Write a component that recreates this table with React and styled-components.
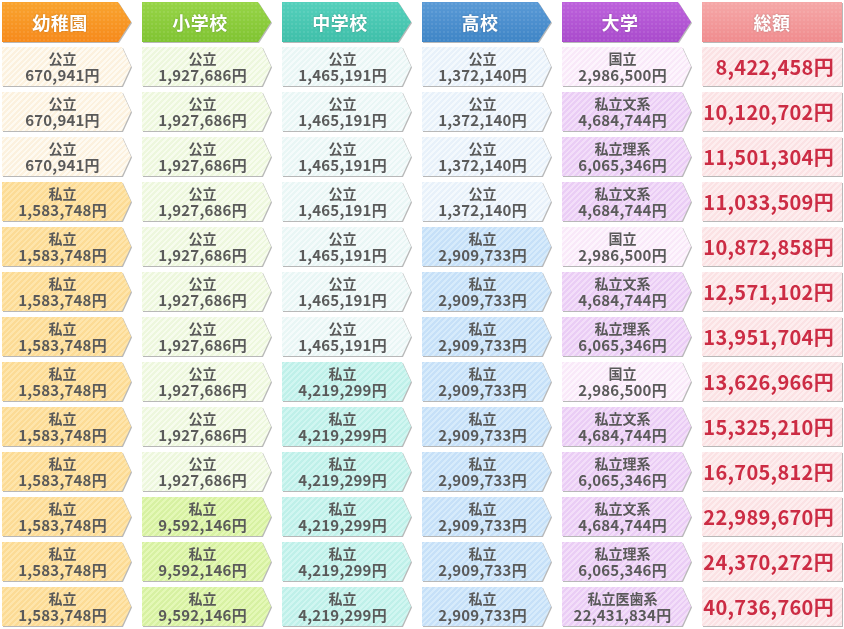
import React from "react";
import styled, { createGlobalStyle } from "styled-components";

const GlobalStyle = createGlobalStyle`
  html, body {
    margin: 0;
    padding: 0;
    background: #fff;
  }
  body {
    font-family: "Noto Sans CJK JP", "Noto Sans", sans-serif;
  }
`;

const columns = [
  { title: "幼稚園", head: ["#f9a42f", "#f68a1c"], light: ["#fefaf1", "#fcf1de"], dark: ["#fee5ac", "#fcdb95"] },
  { title: "小学校", head: ["#97d447", "#80c432"], light: ["#f7fcee", "#edf7dd"], dark: ["#e4f8b7", "#d7f1a2"] },
  { title: "中学校", head: ["#55d0bc", "#3fbfa9"], light: ["#f5fbfb", "#e9f6f5"], dark: ["#d1f6f1", "#bff0e9"] },
  { title: "高校", head: ["#5a9ad6", "#3f85c6"], light: ["#f4f9fd", "#e8f1fa"], dark: ["#d7ebfb", "#c6e0f8"] },
  { title: "大学", head: ["#bd62dc", "#a94bcc"], light: ["#fdf5fd", "#f9e9f9"], dark: ["#f3def9", "#eacdf5"] },
];

const K_PUB = ["公立", "670,941円"];
const K_PRI = ["私立", "1,583,748円"];
const E_PUB = ["公立", "1,927,686円"];
const E_PRI = ["私立", "9,592,146円"];
const M_PUB = ["公立", "1,465,191円"];
const M_PRI = ["私立", "4,219,299円"];
const H_PUB = ["公立", "1,372,140円"];
const H_PRI = ["私立", "2,909,733円"];
const U_NAT = ["国立", "2,986,500円"];
const U_BUN = ["私立文系", "4,684,744円"];
const U_RI = ["私立理系", "6,065,346円"];
const U_MED = ["私立医歯系", "22,431,834円"];

const rows = [
  [K_PUB, E_PUB, M_PUB, H_PUB, U_NAT, "8,422,458円"],
  [K_PUB, E_PUB, M_PUB, H_PUB, U_BUN, "10,120,702円"],
  [K_PUB, E_PUB, M_PUB, H_PUB, U_RI, "11,501,304円"],
  [K_PRI, E_PUB, M_PUB, H_PUB, U_BUN, "11,033,509円"],
  [K_PRI, E_PUB, M_PUB, H_PRI, U_NAT, "10,872,858円"],
  [K_PRI, E_PUB, M_PUB, H_PRI, U_BUN, "12,571,102円"],
  [K_PRI, E_PUB, M_PUB, H_PRI, U_RI, "13,951,704円"],
  [K_PRI, E_PUB, M_PRI, H_PRI, U_NAT, "13,626,966円"],
  [K_PRI, E_PUB, M_PRI, H_PRI, U_BUN, "15,325,210円"],
  [K_PRI, E_PUB, M_PRI, H_PRI, U_RI, "16,705,812円"],
  [K_PRI, E_PRI, M_PRI, H_PRI, U_BUN, "22,989,670円"],
  [K_PRI, E_PRI, M_PRI, H_PRI, U_RI, "24,370,272円"],
  [K_PRI, E_PRI, M_PRI, H_PRI, U_MED, "40,736,760円"],
];

const Table = styled.div`
  display: grid;
  grid-template-columns: repeat(5, 130px) 140px;
  grid-auto-rows: 40px;
  column-gap: 10px;
  row-gap: 5px;
  padding: 2px 0 0 2px;
`;

const Shadow = styled.div`
  filter: drop-shadow(1px 1px 0.6px rgba(0, 0, 0, 0.28));
`;

const Header = styled.div`
  height: 40px;
  display: flex;
  align-items: center;
  justify-content: center;
  padding-right: ${(p) => (p.$arrow ? "14px" : "0")};
  box-sizing: border-box;
  color: #fff;
  font-size: 18px;
  font-weight: 700;
  letter-spacing: 0.5px;
  text-shadow: 0 0 2px rgba(0, 0, 0, 0.25);
  background:
    radial-gradient(rgba(255, 255, 255, 0.18) 0.6px, transparent 0.8px) 0 0 / 4px 4px,
    linear-gradient(180deg, ${(p) => p.$from}, ${(p) => p.$to});
  clip-path: ${(p) =>
    p.$arrow
      ? "polygon(0 0, 116px 0, 129px 50%, 116px 100%, 0 100%)"
      : "none"};
`;

const Cell = styled.div`
  height: 39px;
  display: flex;
  flex-direction: column;
  align-items: center;
  justify-content: center;
  padding-right: 9px;
  box-sizing: border-box;
  color: #5a5a5a;
  font-weight: 700;
  background: repeating-linear-gradient(
    -45deg,
    ${(p) => p.$bg} 0px,
    ${(p) => p.$bg} 2px,
    ${(p) => p.$stripe} 2px,
    ${(p) => p.$stripe} 4px
  );
  clip-path: polygon(0 0, 120px 0, 129px 50%, 120px 100%, 0 100%);
`;

const Kind = styled.div`
  font-size: 14px;
  line-height: 16px;
  height: 16px;
`;

const Amount = styled.div`
  font-size: 15px;
  line-height: 17px;
  height: 17px;
  letter-spacing: 0.2px;
`;

const Total = styled.div`
  height: 39px;
  display: flex;
  align-items: center;
  justify-content: flex-end;
  padding-right: 8px;
  box-sizing: border-box;
  color: #cc2c44;
  font-size: 20px;
  font-weight: 700;
  letter-spacing: 0.3px;
  background: repeating-linear-gradient(
    -45deg,
    #fdeeef 0px,
    #fdeeef 2px,
    #fbe2e4 2px,
    #fbe2e4 4px
  );
`;

export default function App() {
  return (
    <>
      <GlobalStyle />
      <Table>
        {columns.map((c) => (
          <Shadow key={c.title}>
            <Header $arrow $from={c.head[0]} $to={c.head[1]}>
              {c.title}
            </Header>
          </Shadow>
        ))}
        <Shadow>
          <Header $from="#f5a8a8" $to="#f08c8e">総額</Header>
        </Shadow>
        {rows.map((r, i) => (
          <React.Fragment key={i}>
            {r.slice(0, 5).map((v, j) => {
              const col = columns[j];
              const dark = v[0] !== "公立" && v[0] !== "国立";
              const tone = dark ? col.dark : col.light;
              return (
                <Shadow key={j}>
                  <Cell $bg={tone[0]} $stripe={tone[1]}>
                    <Kind>{v[0]}</Kind>
                    <Amount>{v[1]}</Amount>
                  </Cell>
                </Shadow>
              );
            })}
            <Shadow>
              <Total>{r[5]}</Total>
            </Shadow>
          </React.Fragment>
        ))}
      </Table>
    </>
  );
}
